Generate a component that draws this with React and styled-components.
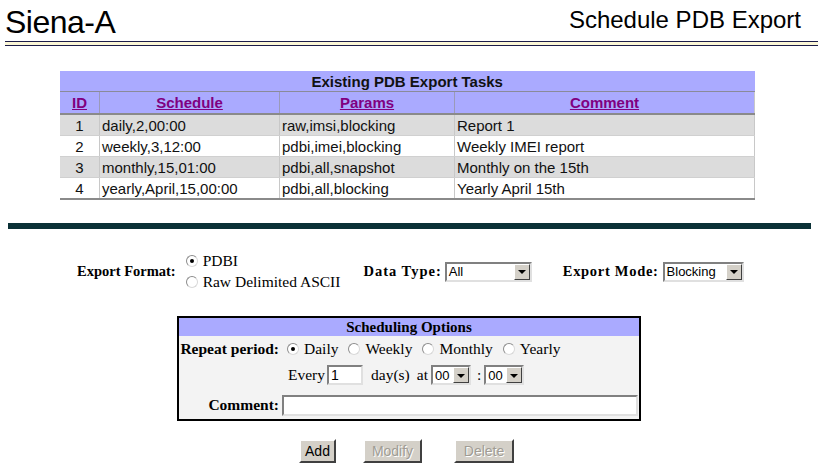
import React from 'react';
import styled, { createGlobalStyle } from 'styled-components';

const GlobalStyle = createGlobalStyle`
  body {
    margin: 0;
    background: #ffffff;
    font-family: 'Liberation Sans', Arial, sans-serif;
    color: #000;
  }
`;

const Page = styled.div`
  width: 824px;
  height: 470px;
  overflow: hidden;
`;

const Header = styled.header`
  display: flex;
  justify-content: space-between;
  align-items: flex-start;
  height: 38px;
  padding: 0 23px 0 5px;
`;

const Brand = styled.h1`
  margin: 6px 0 0;
  font-size: 32px;
  line-height: 32px;
  font-weight: normal;
  letter-spacing: -0.5px;
`;

const PageTitle = styled.h2`
  margin: 8px 0 0;
  font-size: 24px;
  line-height: 24px;
  font-weight: normal;
`;

const Rule = styled.div`
  margin: 3px 6px 0 5px;
  height: 3px;
  border-top: 1px solid #1c1c48;
  border-bottom: 1px solid #1c1c48;
  background: #fbf6d6;
`;

const TaskTable = styled.table`
  margin: 25px 0 0 60px;
  width: 695px;
  border-collapse: collapse;
  font-size: 15px;
  border-bottom: 2px solid #8a8a8a;
  color: #111;
`;

const TitleCell = styled.th`
  height: 20px;
  padding: 0;
  background: #aaaaff;
  font-weight: bold;
  border-bottom: 1px solid #8a8a9a;
`;

const HeadCell = styled.th`
  height: 21px;
  padding: 0;
  background: #aaaaff;
  border-right: 1px solid #9a9ab8;
  border-bottom: 2px solid #8a8a8a;
  width: ${({ w }) => w}px;
  &:last-child { border-right: 1px solid #c8c8c8; }
  a {
    color: #800080;
    font-weight: bold;
    text-decoration: underline;
  }
`;

const Row = styled.tr`
  background: ${({ odd }) => (odd ? '#dcdcdc' : '#ffffff')};
`;

const Cell = styled.td`
  height: 20px;
  padding: 0 2px;
  text-align: ${({ center }) => (center ? 'center' : 'left')};
  border-right: 1px solid #c8c8c8;
  border-bottom: 1px solid #d0d0d0;
  white-space: nowrap;
`;

const Bar = styled.div`
  margin: 23px 13px 0 8px;
  height: 6px;
  background: #0b3136;
`;

const FormRow = styled.div`
  display: flex;
  align-items: center;
  margin-top: 23px;
  padding-left: 77px;
  font-family: 'Liberation Serif', 'Times New Roman', serif;
  font-size: 14.5px;
`;

const Label = styled.span`
  font-weight: bold;
  margin-right: ${({ mr }) => mr || 0}px;
  margin-left: ${({ ml }) => ml || 0}px;
  letter-spacing: ${({ ls }) => ls || 0}px;
  white-space: nowrap;
`;

const RadioStack = styled.div`
  display: flex;
  flex-direction: column;
  gap: 3px;
  font-size: 15.5px;
`;

const RadioItem = styled.label`
  display: inline-flex;
  align-items: center;
  gap: 5px;
  white-space: nowrap;
  margin-right: ${({ mr }) => mr || 0}px;
`;

const RadioDot = styled.span`
  position: relative;
  width: 10px;
  height: 10px;
  border-radius: 50%;
  border: 1px solid #8c8c8c;
  border-right-color: #d8d8d8;
  border-bottom-color: #d8d8d8;
  background: #fff;
  flex: none;
  &::after {
    content: '';
    display: ${({ checked }) => (checked ? 'block' : 'none')};
    position: absolute;
    left: 3px;
    top: 3px;
    width: 4px;
    height: 4px;
    border-radius: 50%;
    background: #000;
  }
`;

const SelectBox = styled.div`
  display: inline-flex;
  align-items: center;
  justify-content: space-between;
  box-sizing: border-box;
  width: ${({ w }) => w}px;
  height: 20px;
  border: 2px solid #808080;
  border-right-color: #e0e0e0;
  border-bottom-color: #e0e0e0;
  background: #fff;
  font-family: 'Liberation Sans', Arial, sans-serif;
  font-size: 13px;
  padding-left: 2px;
`;

const SelectArrow = styled.span`
  display: flex;
  align-items: center;
  justify-content: center;
  width: 16px;
  height: 16px;
  box-sizing: border-box;
  background: #d4d0c8;
  border: 1px solid #fff;
  border-right-color: #404040;
  border-bottom-color: #404040;
  &::after {
    content: '';
    border-left: 4px solid transparent;
    border-right: 4px solid transparent;
    border-top: 4px solid #000;
    margin-top: 1px;
  }
`;

const SchedBox = styled.section`
  margin: 25px 0 0 177px;
  width: 464px;
  height: 105px;
  box-sizing: border-box;
  border: 2px solid #000;
  background: #f3f3f3;
  font-family: 'Liberation Serif', 'Times New Roman', serif;
  font-size: 15.5px;
`;

const SchedTitle = styled.div`
  height: 18px;
  line-height: 18px;
  background: #aaaaff;
  text-align: center;
  font-weight: bold;
  font-size: 15px;
`;

const SchedGrid = styled.div`
  display: grid;
  grid-template-columns: 100px 1fr;
  grid-template-rows: 22px 30px 30px;
  column-gap: 3px;
  margin-top: 2px;
  align-items: center;
`;

const GridLabel = styled.span`
  text-align: right;
  font-weight: bold;
  white-space: nowrap;
`;

const Inline = styled.div`
  display: flex;
  align-items: center;
  padding-left: ${({ pl }) => pl || 0}px;
  white-space: nowrap;
`;

const Spaced = styled.span`
  margin: ${({ m }) => m};
`;

const TextInput = styled.div`
  box-sizing: border-box;
  width: ${({ w }) => (w ? `${w}px` : '100%')};
  height: ${({ h }) => h || 20}px;
  border: 2px solid #808080;
  border-right-color: #e0e0e0;
  border-bottom-color: #e0e0e0;
  background: #fff;
  font-family: 'Liberation Sans', Arial, sans-serif;
  font-size: 14px;
  line-height: 16px;
  padding-left: 2px;
  margin: ${({ m }) => m || '0'};
`;

const ButtonRow = styled.div`
  display: flex;
  margin: 18px 0 0 299px;
`;

const Button = styled.button`
  box-sizing: border-box;
  height: 24px;
  width: ${({ w }) => w}px;
  margin-right: ${({ mr }) => mr || 0}px;
  padding: 0;
  background: #d4d0c8;
  border: 2px solid #fff;
  border-right-color: #404040;
  border-bottom-color: #404040;
  font-family: 'Liberation Sans', Arial, sans-serif;
  font-size: 14px;
  color: ${({ disabled }) => (disabled ? '#a09c94' : '#000')};
  text-shadow: ${({ disabled }) => (disabled ? '1px 1px 0 #fff' : 'none')};
`;

const tasks = [
  ['1', 'daily,2,00:00', 'raw,imsi,blocking', 'Report 1'],
  ['2', 'weekly,3,12:00', 'pdbi,imei,blocking', 'Weekly IMEI report'],
  ['3', 'monthly,15,01:00', 'pdbi,all,snapshot', 'Monthly on the 15th'],
  ['4', 'yearly,April,15,00:00', 'pdbi,all,blocking', 'Yearly April 15th'],
];

const Select = ({ w, value }) => (
  <SelectBox w={w}>
    <span>{value}</span>
    <SelectArrow />
  </SelectBox>
);

const Radio = ({ checked, children, mr }) => (
  <RadioItem mr={mr}>
    <RadioDot checked={checked} />
    {children}
  </RadioItem>
);

export default function App() {
  return (
    <Page>
      <GlobalStyle />
      <Header>
        <Brand>Siena-A</Brand>
        <PageTitle>Schedule PDB Export</PageTitle>
      </Header>
      <Rule />

      <TaskTable>
        <thead>
          <tr>
            <TitleCell colSpan={4}>Existing PDB Export Tasks</TitleCell>
          </tr>
          <tr>
            <HeadCell w={39}><a>ID</a></HeadCell>
            <HeadCell w={179}><a>Schedule</a></HeadCell>
            <HeadCell w={174}><a>Params</a></HeadCell>
            <HeadCell><a>Comment</a></HeadCell>
          </tr>
        </thead>
        <tbody>
          {tasks.map(([id, sched, params, comment], i) => (
            <Row key={id} odd={i % 2 === 0}>
              <Cell center>{id}</Cell>
              <Cell>{sched}</Cell>
              <Cell>{params}</Cell>
              <Cell>{comment}</Cell>
            </Row>
          ))}
        </tbody>
      </TaskTable>

      <Bar />

      <FormRow>
        <Label mr={10}>Export Format:</Label>
        <RadioStack>
          <Radio checked>PDBI</Radio>
          <Radio>Raw Delimited ASCII</Radio>
        </RadioStack>
        <Label ml={23} mr={3} ls={1}>Data Type:</Label>
        <Select w={87} value="All" />
        <Label ml={31} mr={4} ls={0.7}>Export Mode:</Label>
        <Select w={81} value="Blocking" />
      </FormRow>

      <SchedBox>
        <SchedTitle>Scheduling Options</SchedTitle>
        <SchedGrid>
          <GridLabel>Repeat period:</GridLabel>
          <Inline pl={5}>
            <Radio checked mr={10}>Daily</Radio>
            <Radio mr={10}>Weekly</Radio>
            <Radio mr={10}>Monthly</Radio>
            <Radio>Yearly</Radio>
          </Inline>
          <span />
          <Inline pl={6}>
            Every
            <TextInput w={36} m="0 8px 0 2px">1</TextInput>
            day(s)
            <Spaced m="0 3px 0 7px">at</Spaced>
            <Select w={40} value="00" />
            <Spaced m="0 3px 0 6px">:</Spaced>
            <Select w={40} value="00" />
          </Inline>
          <GridLabel>Comment:</GridLabel>
          <Inline>
            <TextInput w={356} h={21} />
          </Inline>
        </SchedGrid>
      </SchedBox>

      <ButtonRow>
        <Button w={37} mr={27}>Add</Button>
        <Button w={59} mr={32} disabled>Modify</Button>
        <Button w={60} disabled>Delete</Button>
      </ButtonRow>
    </Page>
  );
}
